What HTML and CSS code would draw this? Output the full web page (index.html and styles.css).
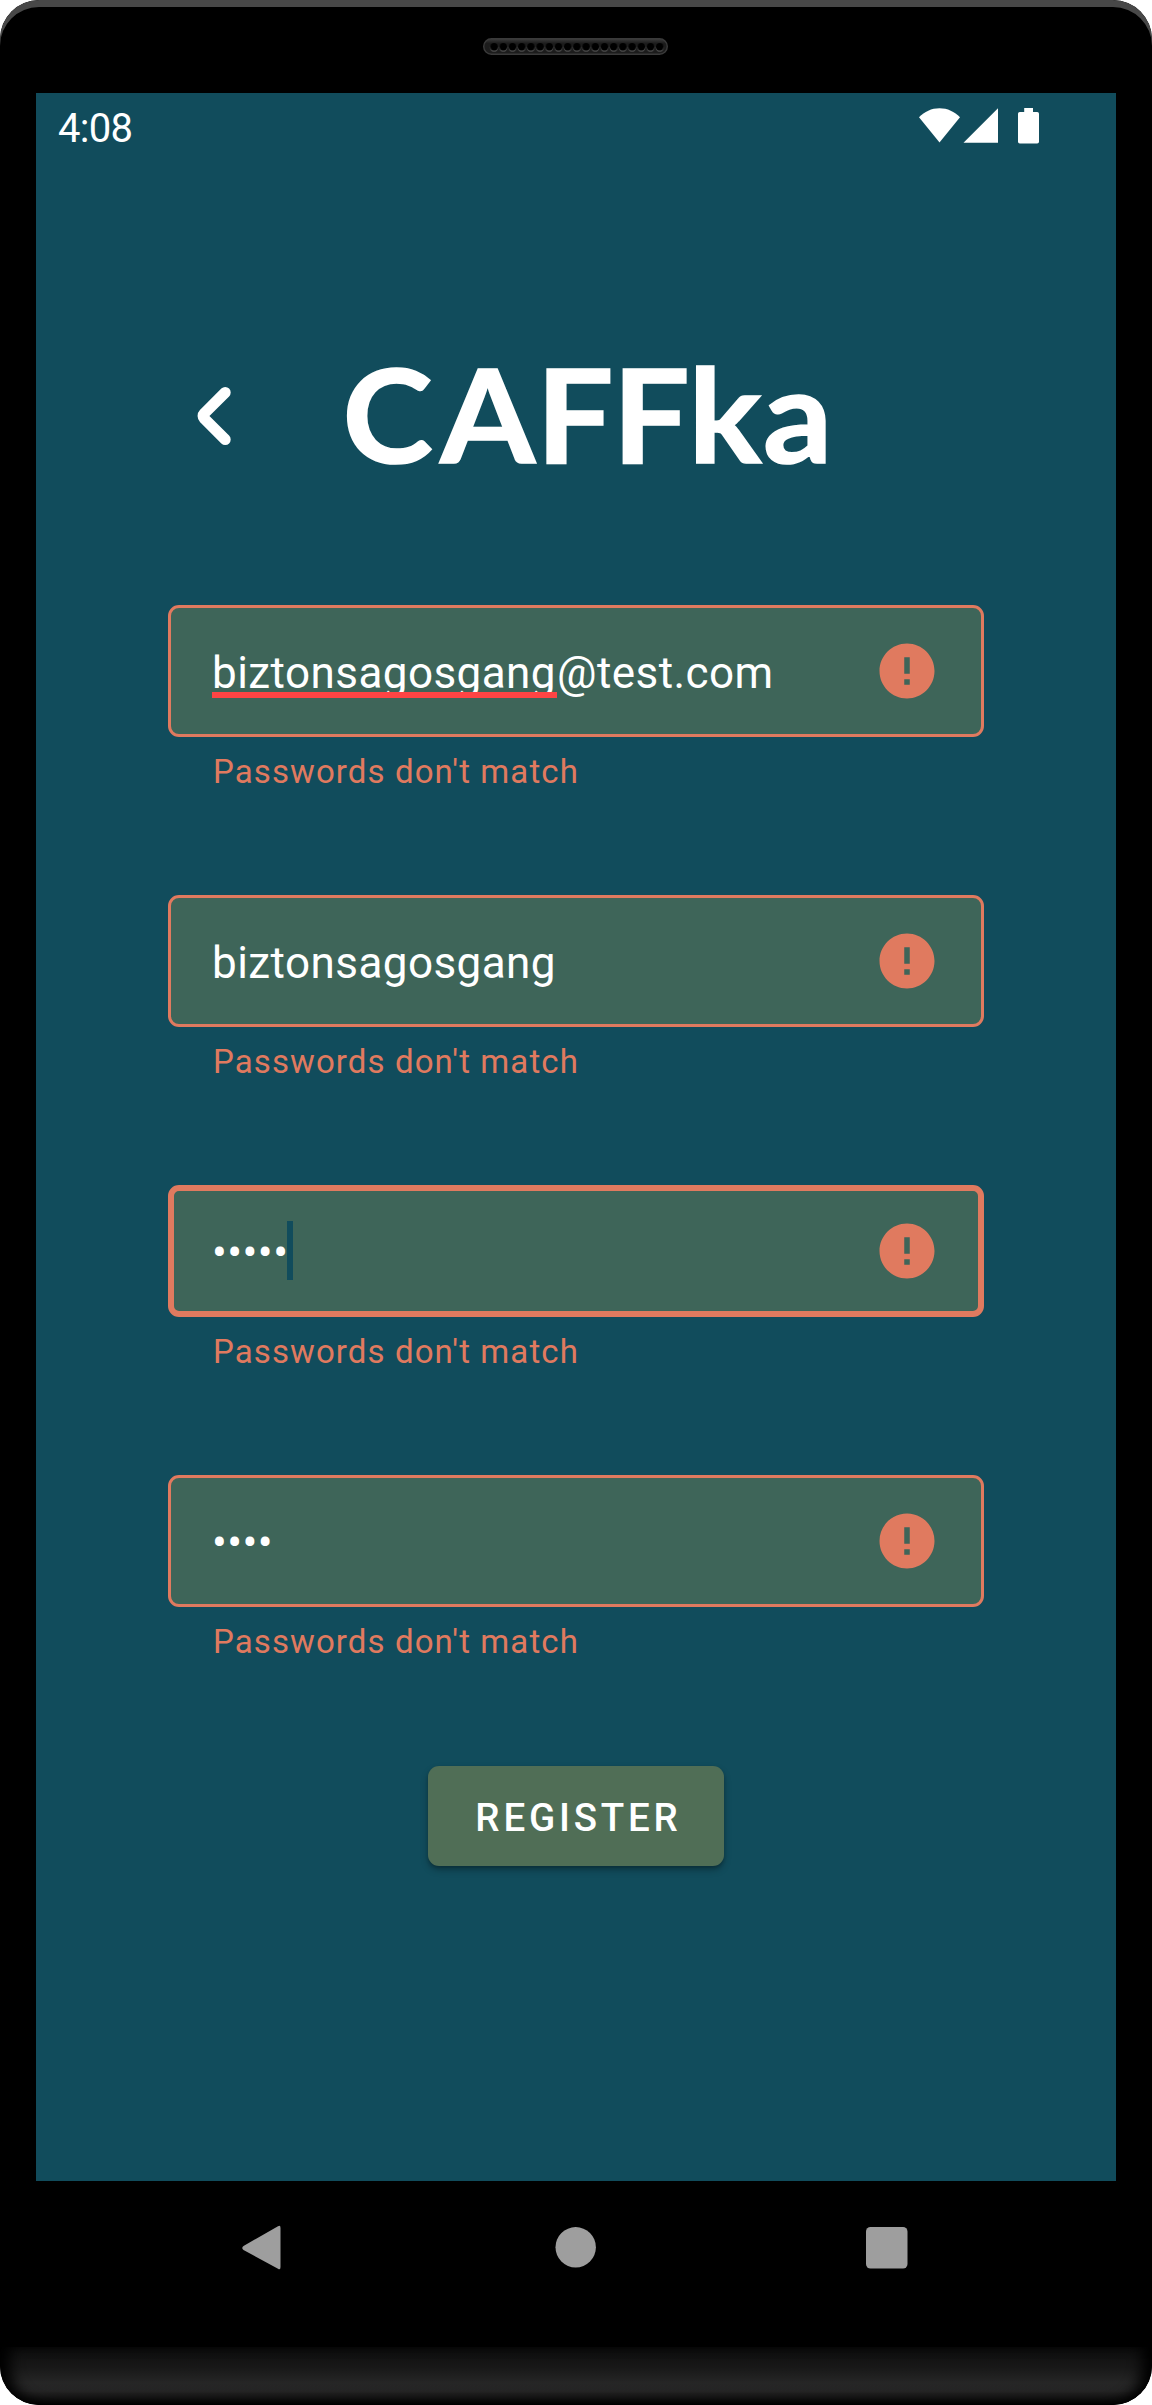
FILE: index.html
```
<!DOCTYPE html>
<html lang="en">
<head>
<meta charset="utf-8">
<title>CAFFka</title>
<link rel="stylesheet" href="styles.css">
</head>
<body>
<svg class="defs" width="0" height="0" aria-hidden="true">
  <symbol id="error" viewBox="0 0 24 24"><path d="M12 2C6.48 2 2 6.48 2 12s4.48 10 10 10 10-4.48 10-10S17.52 2 12 2zm1 15h-2v-2h2v2zm0-4h-2V7h2v6z"/></symbol>
</svg>
<div class="phone">
  <header class="bezel">
    <svg class="speaker" width="186" height="18" viewBox="0 0 186 18">
      <defs>
        <pattern id="holes" x="6.5" y="0" width="9.2" height="18" patternUnits="userSpaceOnUse">
          <circle cx="4.6" cy="9.8" r="4" fill="#4a4a4a"/>
          <circle cx="4.6" cy="8.8" r="3.7" fill="#000"/>
        </pattern>
        <linearGradient id="rim" x2="0" y2="1"><stop offset="0" stop-color="#3c3c3c"/><stop offset=".3" stop-color="#1c1c1c"/><stop offset="1" stop-color="#1c1c1c"/></linearGradient>
      </defs>
      <rect x=".7" y=".7" width="183.6" height="15.6" rx="7.8" fill="url(#rim)" stroke="#3a3a3a" stroke-width="1.4"/>
      <rect x="6.5" y="2" width="174.8" height="14" fill="url(#holes)"/>
    </svg>
  </header>
  <main class="screen">
    <div class="status">
      <span class="clock">4:08</span>
      <svg class="signals" width="121" height="36" viewBox="0 0 121 36" fill="#fff">
        <path d="M0 9.3C5.500 3.500 12.500.2 20.500.2S35.500 3.500 41 9.300L20.500 34.500z"/>
        <path d="M44.500 34.700L79 .2v34.500z"/>
        <path d="M105.200 0h8.800v4h4.200q1.800 0 1.800 1.800v27.900q0 1.800-1.800 1.800h-17.400q-1.800 0-1.800-1.800V5.800q0-1.800 1.800-1.800h4.400z"/>
      </svg>
    </div>
    <div class="brand">
      <svg class="back" width="34" height="58" viewBox="0 0 34 58"><path d="M28.200 5.500L7.300 26.300q-2.500 2.700 0 5.400L28.200 52.500"/></svg>
      <svg class="logo" width="490" height="130" viewBox="0 0 490 130" role="heading" aria-label="CAFFka"><text y="107.500" transform="scale(1.050 1)" x="1.500 94.500 186 258.500 331 402">CAFFka</text></svg>
    </div>
    <form class="form">
      <div class="field">
        <div class="box"><span class="value"><span class="misspelt">biztonsagosgang</span>@test.com</span><svg class="error"><use href="#error"/></svg></div>
        <p class="help">Passwords don't match</p>
      </div>
      <div class="field">
        <div class="box"><span class="value">biztonsagosgang</span><svg class="error"><use href="#error"/></svg></div>
        <p class="help">Passwords don't match</p>
      </div>
      <div class="field">
        <div class="box focused"><span class="value">•••••</span><i class="caret"></i><svg class="error"><use href="#error"/></svg></div>
        <p class="help">Passwords don't match</p>
      </div>
      <div class="field">
        <div class="box"><span class="value">••••</span><svg class="error"><use href="#error"/></svg></div>
        <p class="help">Passwords don't match</p>
      </div>
      <button class="register" type="button">REGISTER</button>
    </form>
  </main>
  <nav class="nav">
    <svg width="40" height="46" viewBox="0 0 40 46"><path d="M36 1.300Q38.500-.5 38.500 3v39q0 3.500-2.500 1.700L1.500 25q-2.500-2 0-4z"/></svg>
    <svg width="43" height="41" viewBox="0 0 43 41"><circle cx="22.700" cy="20.300" r="20.200"/></svg>
    <svg width="42" height="42" viewBox="0 0 42 42"><rect width="41.500" height="41.500" rx="4.500"/></svg>
  </nav>
  <footer class="chin"></footer>
</div>
</body>
</html>
```
FILE: styles.css
```
* { box-sizing: border-box; }
body { margin: 0; background: #fff; font-family: Roboto, "Liberation Sans", sans-serif; }
.defs { position: absolute; }
.phone {
  display: flex;
  flex-direction: column;
  width: 1152px;
  height: 2405px;
  background: #000;
  border-radius: 39px;
  overflow: hidden;
}
.bezel {
  height: 93px;
  flex: none;
  padding: 38px 0 0 483px;
  border-radius: 39px 39px 0 0;
  box-shadow: inset 0 7px 0 #484848;
}
.speaker { display: block; }
.screen {
  flex: none;
  width: 1080px;
  height: 2088px;
  margin: 0 36px;
  background: #114c5c;
  color: #fff;
}
.status {
  display: flex;
  align-items: flex-start;
  justify-content: space-between;
  height: 66px;
  padding: 15px 76px 0 22px;
}
.clock { margin-top: 1px; font-size: 40px; line-height: 40px; letter-spacing: -.7px; }
.brand {
  display: flex;
  height: 446px;
  padding: 196px 0 0 161px;
}
.back { flex: none; margin: 32px 110px 0 0; fill: none; stroke: #fff; stroke-width: 11; stroke-linecap: round; stroke-linejoin: round; }
.logo {
  flex: none;
  overflow: visible;
  fill: #fff;
  stroke: #fff;
  stroke-width: 1.6;
  font-family: Lato, sans-serif;
  font-size: 130px;
  font-weight: 700;
}
.form { display: flex; flex-direction: column; width: 816px; margin-left: 132px; }
.field { height: 290px; }
.box {
  display: flex;
  align-items: center;
  height: 132px;
  padding: 0 41px;
  border: 3px solid #e07a5f;
  border-radius: 11px;
  background: #3e6559;
}
.focused { padding: 0 38px; border-width: 6px; }
.value { padding-top: 4px; font-size: 44px; line-height: 59px; letter-spacing: .44px; white-space: nowrap; }
.misspelt {
  position: relative;
  display: inline-block;
  width: 345px;
  height: 59px;
}
.misspelt::after {
  content: "";
  position: absolute;
  left: 0;
  right: 0;
  top: 48px;
  height: 6px;
  background: #ff4444;
}
.caret { width: 6px; height: 59px; margin: 0 0 1px -1px; background: #114c5c; }
.error { width: 66px; height: 66px; margin-left: auto; fill: #e07a5f; }
.help { margin: 13px 0 0 45px; font-size: 33px; line-height: 44px; letter-spacing: 1.1px; color: #e07a5f; }
.register {
  align-self: center;
  width: 296px;
  height: 100px;
  margin-top: 1px;
  padding: 3px 0 0 5px;
  border: 0;
  border-radius: 11px;
  background: #506e56;
  box-shadow: 0 4px 7px rgba(0, 0, 0, .28), 0 2px 3px rgba(0, 0, 0, .15);
  color: #fff;
  font: 500 38.500px/46px Roboto, sans-serif;
  letter-spacing: 3.800px;
}
.nav {
  display: flex;
  flex: none;
  align-items: center;
  justify-content: space-between;
  height: 166px;
  padding: 1px 244px 34px 242px;
  fill: #9e9e9e;
}
.chin {
  flex: 1;
  border-radius: 0 0 39px 39px;
  background: linear-gradient(#0e0e0e, #181818 35%, #262626 62%, #242424 76%, #080808 97%, #000);
  box-shadow: inset 14px 0 14px -4px #000, inset -14px 0 14px -4px #000;
}
```
